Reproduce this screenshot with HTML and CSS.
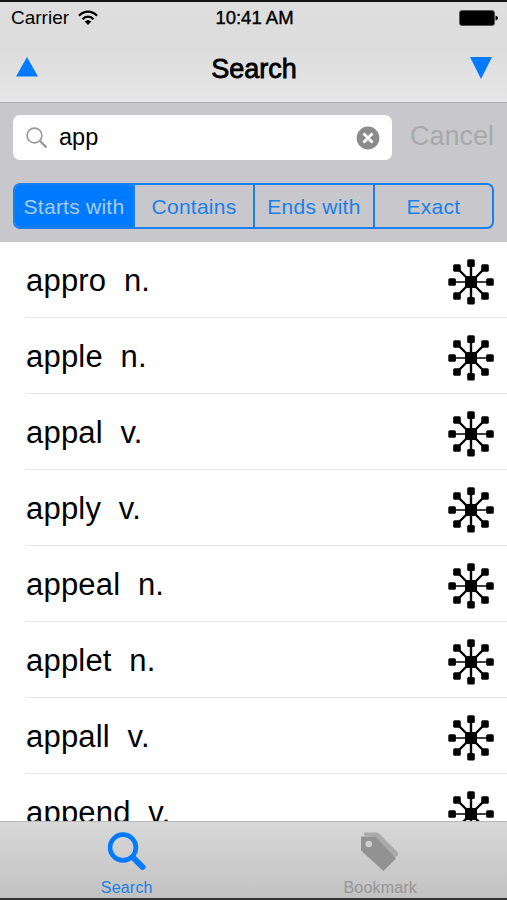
FILE: index.html
```
<!DOCTYPE html>
<html lang="en">
<head>
    <meta charset="UTF-8">
    <meta name="viewport" content="width=device-width, initial-scale=1.0">
    <title>Search</title>
    <link rel="stylesheet" href="styles.css">
</head>
<body>
    <svg class="symbols">
        <symbol id="network" viewBox="0 0 48 48">
            <path d="M24 24V5M24 24V43M10 10L38 38M38 10L10 38" stroke="#000" stroke-width="2.4"/>
            <path d="M5 24H43" stroke="#000" stroke-width="1.5"/>
            <rect x="18" y="18" width="12" height="12" rx="1"/>
            <rect x="20.2" y="1.3" width="7.6" height="7.6" rx="1.5"/>
            <rect x="20.2" y="39" width="7.6" height="7.6" rx="1.5"/>
            <rect x="1.3" y="20.2" width="7.6" height="7.6" rx="1.5"/>
            <rect x="39.2" y="20.2" width="7.6" height="7.6" rx="1.5"/>
            <rect x="6.2" y="6.2" width="7.6" height="7.6" rx="1.5"/>
            <rect x="34.2" y="6.2" width="7.6" height="7.6" rx="1.5"/>
            <rect x="6.2" y="34.2" width="7.6" height="7.6" rx="1.5"/>
            <rect x="34.2" y="34.2" width="7.6" height="7.6" rx="1.5"/>
        </symbol>
    </svg>

    <div class="header">
        <div class="status-bar">
            <div class="carrier">
                <span>Carrier</span>
                <svg width="20" height="16" viewBox="0 0 20 16" fill="none" stroke="#000" stroke-width="2.3">
                    <path d="M1 5.7C6 0.2 14 0.2 19 5.7"/>
                    <path d="M4.5 9.2C7.5 5.8 12.5 5.8 15.5 9.2"/>
                    <path d="M6.7 11.6Q10 8.4 13.3 11.6L10 15Z" fill="#000" stroke="none"/>
                </svg>
            </div>
            <div class="time">10:41 AM</div>
            <svg class="battery" width="39" height="16" viewBox="0 0 39 16">
                <rect x="0.5" y="0.5" width="35" height="15" rx="2.5" fill="#000" stroke="#555"/>
                <path d="M36.5 5.5Q39 6 39 8T36.5 10.5Z"/>
            </svg>
        </div>
        <div class="nav">
            <svg width="22" height="22" viewBox="0 0 22 22" fill="#007aff"><path d="M11 0L22 19.5H0Z"/></svg>
            <h1>Search</h1>
            <svg width="22" height="22" viewBox="0 0 22 22" fill="#007aff"><path d="M0 0H22L11 22Z"/></svg>
        </div>
    </div>

    <div class="search-section">
        <div class="search-row">
            <div class="search-bar">
                <svg width="22" height="22" viewBox="0 0 22 22" fill="none" stroke="#98989b">
                    <circle cx="8.5" cy="8.5" r="7.4" stroke-width="1.7"/>
                    <path d="M13.8 13.8L20.5 20.5" stroke-width="2.4"/>
                </svg>
                <span class="query">app</span>
                <svg width="24" height="24" viewBox="0 0 24 24">
                    <circle cx="12" cy="12" r="11.4" fill="#8b8b8e"/>
                    <path d="M7.5 7.5L16.5 16.5M16.5 7.5L7.5 16.5" stroke="#fff" stroke-width="2.8"/>
                </svg>
            </div>
            <span class="cancel">Cancel</span>
        </div>
        <div class="tabs">
            <div class="tab active">Starts with</div>
            <div class="tab">Contains</div>
            <div class="tab">Ends with</div>
            <div class="tab">Exact</div>
        </div>
    </div>

    <ul class="results">
        <li><span>appro&nbsp; n.</span><svg class="network"><use href="#network"/></svg></li>
        <li><span>apple&nbsp; n.</span><svg class="network"><use href="#network"/></svg></li>
        <li><span>appal&nbsp; v.</span><svg class="network"><use href="#network"/></svg></li>
        <li><span>apply&nbsp; v.</span><svg class="network"><use href="#network"/></svg></li>
        <li><span>appeal&nbsp; n.</span><svg class="network"><use href="#network"/></svg></li>
        <li><span>applet&nbsp; n.</span><svg class="network"><use href="#network"/></svg></li>
        <li><span>appall&nbsp; v.</span><svg class="network"><use href="#network"/></svg></li>
        <li><span>append&nbsp; v.</span><svg class="network"><use href="#network"/></svg></li>
    </ul>

    <div class="tab-bar">
        <div class="tab-item selected">
            <svg width="40" height="40" viewBox="0 0 40 40" fill="none" stroke="#007aff">
                <circle cx="16" cy="15.5" r="12.9" stroke-width="4.6"/>
                <path d="M26 25.5L35.5 35" stroke-width="6" stroke-linecap="round"/>
            </svg>
            <span>Search</span>
        </div>
        <div class="tab-item">
            <svg width="40" height="40" viewBox="0 0 40 40">
                <path d="M4 0.5H18L38 20.5V23L34.5 26L16 5L4 3.5Z" fill="#aaa"/>
                <path d="M1 4.5H15.5L36 26.5L23.5 39L1 18.5Z" fill="#929292"/>
                <circle cx="8.8" cy="12" r="3.3" fill="#d0d0d0"/>
            </svg>
            <span>Bookmark</span>
        </div>
    </div>
</body>
</html>
```
FILE: styles.css
```
* {
    margin: 0;
    padding: 0;
    box-sizing: border-box;
    font-family: "Liberation Sans", Arial, sans-serif;
}

body {
    height: 900px;
    display: flex;
    flex-direction: column;
    overflow: hidden;
    background: #fff;
    color: #000;
}

svg {
    display: block;
    flex-shrink: 0;
}

.symbols {
    position: absolute;
    width: 0;
    height: 0;
}

.header {
    height: 103px;
    flex-shrink: 0;
    border-top: 2px solid #151515;
    border-bottom: 1px solid #b0b0b2;
    background: linear-gradient(#dedede, #dcdcdc 45%, #e6e6e6);
}

.status-bar {
    height: 32px;
    padding: 0 9px 0 11px;
    display: grid;
    grid-template-columns: 1fr auto 1fr;
    align-items: center;
    font-size: 19px;
}

.carrier {
    display: flex;
    align-items: center;
    gap: 9px;
}

.time {
    font-size: 18.5px;
    -webkit-text-stroke: 0.4px #000;
}

.battery {
    justify-self: end;
}

.nav {
    height: 68px;
    padding: 0 15px 0 16px;
    display: flex;
    justify-content: space-between;
    align-items: center;
}

.nav h1 {
    padding-top: 2px;
    font-size: 27px;
    font-weight: normal;
    -webkit-text-stroke: 0.8px #000;
}

.search-section {
    height: 139px;
    flex-shrink: 0;
    padding: 12px 13px 0;
    background: #c8c8cc;
}

.search-row {
    height: 45px;
    display: flex;
    justify-content: space-between;
}

.search-bar {
    width: 379px;
    height: 45px;
    padding: 0 12px 0 13px;
    display: flex;
    align-items: center;
    border-radius: 7px;
    background: #fff;
}

.query {
    flex: 1;
    margin-left: 11px;
    font-size: 23.5px;
}

.cancel {
    font-size: 27px;
    line-height: 42px;
    color: #a9a9ac;
}

.tabs {
    height: 46px;
    margin-top: 23px;
    display: grid;
    grid-template-columns: 118px 120px 120px 1fr;
    border: 2px solid #1b7fef;
    border-radius: 7px;
    overflow: hidden;
}

.tab {
    line-height: 43px;
    text-align: center;
    font-size: 21px;
    letter-spacing: 0.25px;
    color: #1b7fe8;
    border-left: 2px solid #1b7fef;
}

.tab.active {
    background: #007aff;
    color: #a9cbef;
    border-left: none;
}

.results {
    flex: 1;
    min-height: 0;
    overflow: hidden;
    list-style: none;
}

.results li {
    height: 76px;
    margin-left: 26px;
    padding-right: 12px;
    display: flex;
    justify-content: space-between;
    align-items: center;
    border-bottom: 1px solid #e4e4e6;
    font-size: 31px;
    letter-spacing: 0.2px;
}

.results span {
    padding-top: 2px;
}

.network {
    width: 48px;
    height: 48px;
    margin-top: 5px;
}

.tab-bar {
    height: 79px;
    flex-shrink: 0;
    display: flex;
    border-top: 1px solid #b8b8b8;
    border-bottom: 2px solid #333;
    background: linear-gradient(#d8d8d8, #c2c2c2);
}

.tab-item {
    flex: 1;
    padding-top: 10px;
    display: flex;
    flex-direction: column;
    align-items: center;
    font-size: 16px;
    letter-spacing: 0.2px;
    color: #959595;
}

.tab-item span {
    margin-top: 7px;
}

.tab-item.selected {
    color: #1b7fe8;
}
```
